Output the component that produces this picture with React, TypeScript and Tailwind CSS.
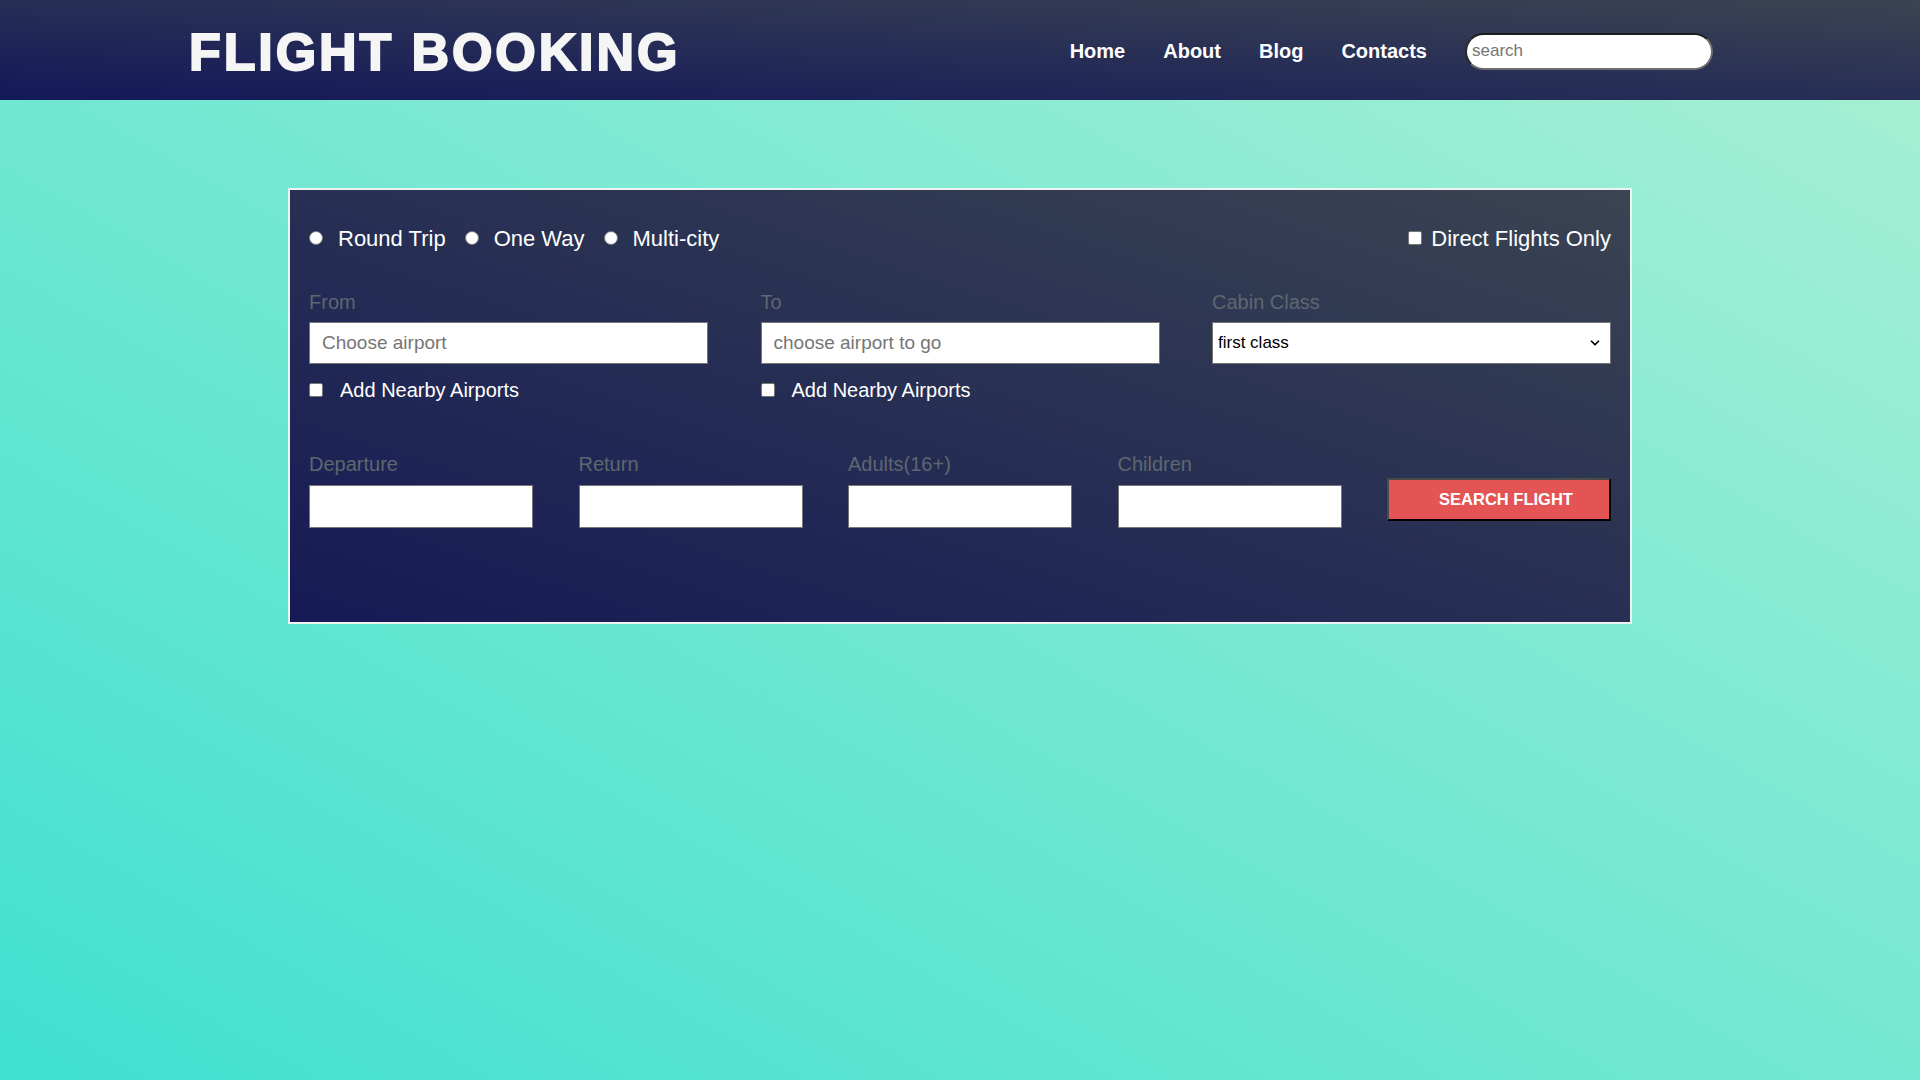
import { ChevronDown } from "lucide-react";

const font = "font-['Liberation_Sans',Arial,sans-serif]";

function Radio({ label }: { label: string }) {
  return (
    <label className="flex items-center mr-[19px]">
      <input type="radio" name="trip" className="appearance-none w-[14px] h-[14px] rounded-full bg-white border border-[#767676]" />
      <span className="ml-[15px]">{label}</span>
    </label>
  );
}

function Check({ label, gap }: { label: string; gap: string }) {
  return (
    <label className="flex items-center">
      <input type="checkbox" className="appearance-none w-[14px] h-[14px] rounded-[2px] bg-white border border-[#767676]" />
      <span className={gap}>{label}</span>
    </label>
  );
}

function Field({ label, placeholder, wide }: { label: string; placeholder?: string; wide?: boolean }) {
  return (
    <div className={wide ? "w-[399px]" : "w-[224px]"}>
      <div className={`h-[23px] leading-[23px] text-[20px] text-[#5d676f] ${wide ? "mb-[8px]" : "mb-[9px]"}`}>{label}</div>
      <input
        placeholder={placeholder}
        className={`w-full ${wide ? "h-[42px]" : "h-[43px]"} bg-white border border-[#767676] px-[12px] text-[19px] text-black placeholder:text-[#757575] outline-none`}
      />
    </div>
  );
}

export default function App() {
  return (
    <div className={`${font} min-h-screen w-full bg-[linear-gradient(to_top_right,#40e0d0,#a9f0d4)]`}>
      <header className="h-[100px] flex items-center justify-between pl-[189px] pr-[207px] bg-[linear-gradient(to_top_right,#131859,#3b4452)]">
        <h1 className="mt-[3px] text-[52px] font-black tracking-[2.9px] text-[#f5f5f5] leading-none [-webkit-text-stroke:2px_#f5f5f5]">
          FLIGHT BOOKING
        </h1>
        <nav className="pt-[2px] flex items-center gap-[38px] text-[20px] font-bold text-white">
          <a href="#">Home</a>
          <a href="#">About</a>
          <a href="#">Blog</a>
          <a href="#">Contacts</a>
          <input
            placeholder="search"
            className="w-[248px] h-[37px] rounded-full bg-white border-2 border-t-[#1e1e1e] border-l-[#2a2a2a] border-b-[#6e6e6e] border-r-[#6e6e6e] pl-[5px] text-[17px] font-normal text-black placeholder:text-[#757575] outline-none"
          />
        </nav>
      </header>

      <div className="mx-auto mt-[88px] w-[1344px] border-2 border-[#eef2f2] px-[19px] pt-[35px] pb-[94px] bg-[linear-gradient(to_top_right,#151a55,#3a4452)]">
        <div className="flex h-[26px] items-center justify-between text-[22px] text-white">
          <div className="flex items-center">
            <Radio label="Round Trip" />
            <Radio label="One Way" />
            <Radio label="Multi-city" />
          </div>
          <Check label="Direct Flights Only" gap="ml-[9px]" />
        </div>

        <div className="mt-[40px] flex justify-between">
          <div className="w-[399px]">
            <Field label="From" placeholder="Choose airport" wide />
            <div className="mt-[14px] h-[23px] flex items-center text-[20px] text-white">
              <Check label="Add Nearby Airports" gap="ml-[17px]" />
            </div>
          </div>
          <div className="w-[399px]">
            <Field label="To" placeholder="choose airport to go" wide />
            <div className="mt-[14px] h-[23px] flex items-center text-[20px] text-white">
              <Check label="Add Nearby Airports" gap="ml-[17px]" />
            </div>
          </div>
          <div className="w-[399px]">
            <div className="h-[23px] leading-[23px] text-[20px] text-[#5d676f] mb-[8px]">Cabin Class</div>
            <div className="relative">
              <select className="appearance-none w-full h-[42px] bg-white border border-[#767676] pl-[5px] text-[17px] text-black outline-none">
                <option>first class</option>
                <option>business</option>
                <option>economy</option>
              </select>
              <ChevronDown className="absolute right-[9px] top-[14px] w-[14px] h-[14px] text-black pointer-events-none" strokeWidth={3} />
            </div>
          </div>
        </div>

        <div className="mt-[52px] flex items-start justify-between">
          <Field label="Departure" />
          <Field label="Return" />
          <Field label="Adults(16+)" />
          <Field label="Children" />
          <button className="mt-[25px] w-[224px] h-[43px] pl-[14px] bg-[#e55454] border-2 border-t-[#4a4a4a] border-l-[#4a4a4a] border-b-black border-r-black text-[16.5px] font-bold text-white">
            SEARCH FLIGHT
          </button>
        </div>
      </div>
    </div>
  );
}
